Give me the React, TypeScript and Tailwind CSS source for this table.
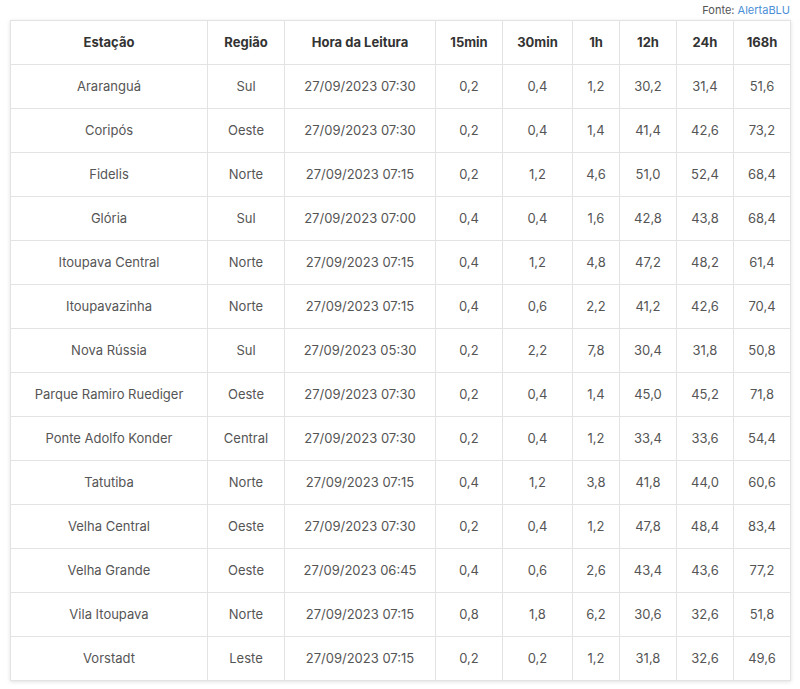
import React from 'react'

const rows: string[][] = [
  ["Araranguá", "Sul", "27/09/2023 07:30", "0,2", "0,4", "1,2", "30,2", "31,4", "51,6"],
  ["Coripós", "Oeste", "27/09/2023 07:30", "0,2", "0,4", "1,4", "41,4", "42,6", "73,2"],
  ["Fidelis", "Norte", "27/09/2023 07:15", "0,2", "1,2", "4,6", "51,0", "52,4", "68,4"],
  ["Glória", "Sul", "27/09/2023 07:00", "0,4", "0,4", "1,6", "42,8", "43,8", "68,4"],
  ["Itoupava Central", "Norte", "27/09/2023 07:15", "0,4", "1,2", "4,8", "47,2", "48,2", "61,4"],
  ["Itoupavazinha", "Norte", "27/09/2023 07:15", "0,4", "0,6", "2,2", "41,2", "42,6", "70,4"],
  ["Nova Rússia", "Sul", "27/09/2023 05:30", "0,2", "2,2", "7,8", "30,4", "31,8", "50,8"],
  ["Parque Ramiro Ruediger", "Oeste", "27/09/2023 07:30", "0,2", "0,4", "1,4", "45,0", "45,2", "71,8"],
  ["Ponte Adolfo Konder", "Central", "27/09/2023 07:30", "0,2", "0,4", "1,2", "33,4", "33,6", "54,4"],
  ["Tatutiba", "Norte", "27/09/2023 07:15", "0,4", "1,2", "3,8", "41,8", "44,0", "60,6"],
  ["Velha Central", "Oeste", "27/09/2023 07:30", "0,2", "0,4", "1,2", "47,8", "48,4", "83,4"],
  ["Velha Grande", "Oeste", "27/09/2023 06:45", "0,4", "0,6", "2,6", "43,4", "43,6", "77,2"],
  ["Vila Itoupava", "Norte", "27/09/2023 07:15", "0,8", "1,8", "6,2", "30,6", "32,6", "51,8"],
  ["Vorstadt", "Leste", "27/09/2023 07:15", "0,2", "0,2", "1,2", "31,8", "32,6", "49,6"],
]

const headers = ["Estação", "Região", "Hora da Leitura", "15min", "30min", "1h", "12h", "24h", "168h"]
const widths = ["w-[197px]", "w-[77px]", "w-[151px]", "w-[67px]", "w-[70px]", "w-[47px]", "w-[57px]", "w-[57px]", "w-[57px]"]

export default function App() {
  return (
    <div className="w-[800px] h-[689px] bg-white px-[10px] font-['Inter',sans-serif]">
      <div className="flex justify-end h-[20px] items-center text-[11px] text-[#555]">
        Fonte:&nbsp;<span className="text-[#4a8fd6]">AlertaBLU</span>
      </div>
      <table className="table-fixed w-[780px] border-collapse shadow-[0_1px_4px_rgba(0,0,0,0.12)]">
        <thead>
          <tr className="h-[44px]">
            {headers.map((h, i) => (
              <th
                key={h}
                className={`${widths[i]} border border-[#e3e3e3] text-center text-[13px] font-bold text-[#333]`}
              >
                {h}
              </th>
            ))}
          </tr>
        </thead>
        <tbody>
          {rows.map((r) => (
            <tr key={r[0]} className="h-[44px]">
              {r.map((c, i) => (
                <td key={i} className="border border-[#e3e3e3] text-center text-[13px] text-[#555]">
                  {c}
                </td>
              ))}
            </tr>
          ))}
        </tbody>
      </table>
    </div>
  )
}
